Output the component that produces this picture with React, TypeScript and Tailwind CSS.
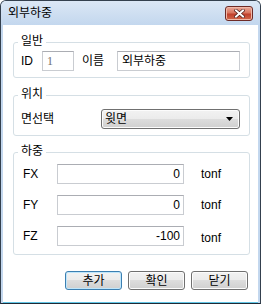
import type React from "react"

function Group({ label, className, children }: { label: string; className: string; children: React.ReactNode }) {
  return (
    <div className={`border border-[#d5dfe5] rounded-[3px] ${className}`}>
      <div className="-mt-[9px] ml-[4px] w-fit bg-white px-[3px] leading-[14px]">{label}</div>
      {children}
    </div>
  )
}

function TextBox({ value, className, muted }: { value: string; className: string; muted?: boolean }) {
  return (
    <div
      className={`h-[20px] flex items-center border border-[#c9ccd1] border-t-[#abadb3] bg-white leading-[14px] ${className} ${
        muted ? "text-[#6d6d6d]" : "text-black"
      }`}
    >
      {value}
    </div>
  )
}

function Button({ label, primary }: { label: string; primary?: boolean }) {
  return (
    <div
      className={`w-[57px] h-[19px] rounded-[3px] border flex items-center justify-center leading-[14px] bg-[linear-gradient(#f2f2f2_0%,#ebebeb_50%,#dddddd_50%,#cfcfcf_100%)] ${
        primary ? "border-[#3c7fb1] shadow-[inset_0_0_0_1px_#bfe6fb]" : "border-[#707070] shadow-[inset_0_0_0_1px_#fcfcfc]"
      }`}
    >
      {label}
    </div>
  )
}

export default function App() {
  const forces = [
    { name: "FX", value: "0", unit: "" },
    { name: "FY", value: "0", unit: "" },
    { name: "FZ", value: "-100", unit: "mt-[4px]" },
  ]

  return (
    <div className="w-[261px] h-[304px] flex flex-col border border-[#34404e] border-b-[#1e2a36] rounded-t-[6px] bg-[#c3d7ee] text-[12px] text-black font-['Liberation_Sans','Noto_Sans_CJK_KR',sans-serif] overflow-hidden">
      {/* Title bar */}
      <div className="h-[24px] shrink-0 flex items-center justify-between pl-[7px] pr-[7px] bg-[linear-gradient(#dbe7f5,#c3d7ee)]">
        <span className="leading-[14px]">외부하중</span>
        <div className="w-[28px] h-[15px] rounded-[3px] border border-[#6d2a26] flex items-center justify-center bg-[linear-gradient(#e9a99b_0%,#d9765f_45%,#c0402c_55%,#d16a4c_100%)] shadow-[inset_0_0_0_1px_#f0b9a9]">
          <svg width="11" height="9" viewBox="0 0 11 9">
            <path d="M2 1.5 L9 7.5 M9 1.5 L2 7.5" stroke="#4a1a16" strokeWidth="3.4" strokeLinecap="square" />
            <path d="M2 1.5 L9 7.5 M9 1.5 L2 7.5" stroke="#ffffff" strokeWidth="2" strokeLinecap="square" />
          </svg>
        </div>
      </div>

      {/* Client area */}
      <div className="flex-1 mx-[2px] mb-[1px] bg-white pt-[17px] pl-[10px] pr-[8px] shadow-[0_1px_0_#62c6e6]">
        <Group label="일반" className="h-[36px]">
          <div className="mt-[3px] pl-[7px] flex items-center h-[20px]">
            <span className="w-[21px]">ID</span>
            <TextBox value="1" muted className="w-[32px] pl-[4px] font-['Liberation_Serif','Noto_Sans_CJK_KR',serif]" />
            <span className="ml-[8px] w-[35px]">이름</span>
            <TextBox value="외부하중" className="w-[123px] pl-[4px]" />
          </div>
        </Group>

        <Group label="위치" className="mt-[17px] h-[41px]">
          <div className="mt-[8px] pl-[7px] flex items-center h-[20px]">
            <span className="w-[80px]">면선택</span>
            <div className="w-[139px] h-[20px] rounded-[3px] border border-[#707070] flex items-center justify-between pl-[3px] pr-[6px] bg-[linear-gradient(#f2f2f2_0%,#ebebeb_50%,#dddddd_50%,#cfcfcf_100%)] shadow-[inset_0_0_0_1px_#fcfcfc]">
              <span className="leading-[14px]">윗면</span>
              <svg width="7" height="4" viewBox="0 0 7 4">
                <path d="M0 0 H7 L3.5 4 Z" fill="#000" />
              </svg>
            </div>
          </div>
        </Group>

        <Group label="하중" className="mt-[16px] h-[103px]">
          <div className="mt-[6px] pl-[9px] flex flex-col gap-[11px]">
            {forces.map((f) => (
              <div key={f.name} className="flex items-center h-[20px]">
                <span className="w-[34px]">{f.name}</span>
                <TextBox value={f.value} className="w-[127px] justify-end pr-[3px]" />
                <span className={`ml-[17px] ${f.unit}`}>tonf</span>
              </div>
            ))}
          </div>
        </Group>

        <div className="mt-[16px] mr-[2px] flex justify-end gap-[6px]">
          <Button label="추가" primary />
          <Button label="확인" />
          <Button label="닫기" />
        </div>
      </div>
    </div>
  )
}
